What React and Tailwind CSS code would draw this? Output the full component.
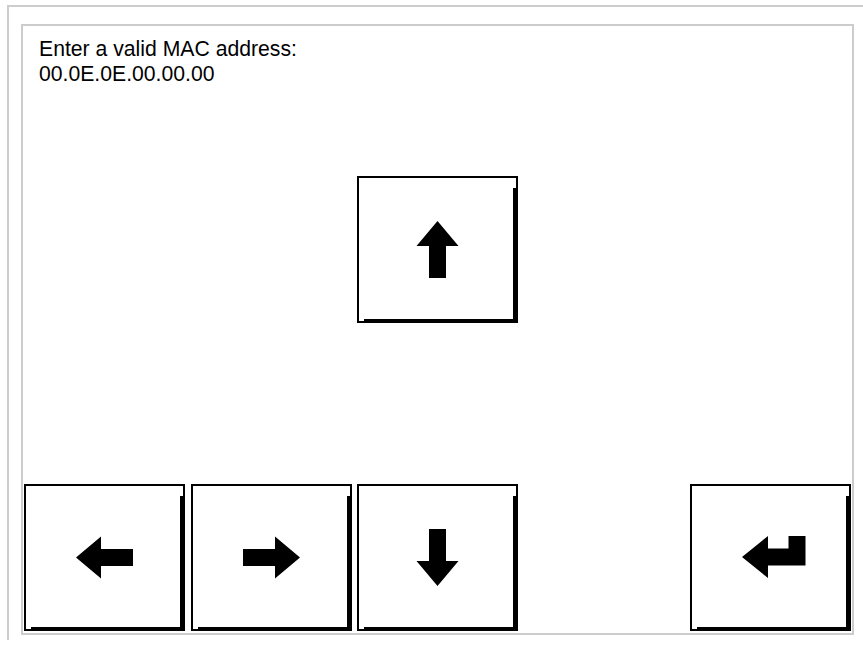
function Arrow({ dir }) {
  // one shape, turned for each direction
  const turn = { up: 'rotate-0', right: 'rotate-90', down: 'rotate-180', left: '-rotate-90' }[dir];
  return (
    <svg width="57" height="57" viewBox="0 0 57 57" className={turn}>
      <polygon points="28.5,0 49.5,25 37,25 37,57 20,57 20,25 7.5,25" fill="#000" />
    </svg>
  );
}

function EnterArrow() {
  return (
    <svg width="64" height="43" viewBox="0 0 64 43" className="ml-[6px]">
      <polygon points="0,21 26,0 26,12.5 46.5,12.5 46.5,0 63.5,0 63.5,29.5 26,29.5 26,42" fill="#000" />
    </svg>
  );
}

function Key({ children }) {
  return (
    <button className="relative w-[161px] h-[147px] bg-white border-2 border-black flex items-center justify-center before:content-[''] before:absolute before:right-0 before:top-[10px] before:bottom-0 before:w-[3px] before:bg-black after:content-[''] after:absolute after:left-[5px] after:right-0 after:bottom-0 after:h-[2px] after:bg-black">
      {children}
    </button>
  );
}

export default function App() {
  return (
    <div className="w-[863px] h-[651px] bg-white overflow-hidden pt-[5px] pl-[7px] font-['Liberation_Sans',Arial,sans-serif] text-black">
      <div className="h-[635px] border-t-2 border-l-2 border-[#cccccc] pt-[17px] pl-[12px]">
        <div className="w-[833px] h-[611px] border-2 border-[#cccccc] flex flex-col">
          <div className="pt-[10px] pl-[16px] text-[21.2px] leading-[25px]">
            <p>Enter a valid MAC address:</p>
            <p>00.0E.0E.00.00.00</p>
          </div>

          <div className="grid grid-cols-5 gap-x-[5.5px] px-[1px] mt-[90px]">
            <div />
            <div />
            <Key><Arrow dir="up" /></Key>
          </div>

          <div className="grid grid-cols-5 gap-x-[5.5px] px-[1px] mt-[161px]">
            <Key><Arrow dir="left" /></Key>
            <Key><Arrow dir="right" /></Key>
            <Key><Arrow dir="down" /></Key>
            <div />
            <Key><EnterArrow /></Key>
          </div>
        </div>
      </div>
    </div>
  );
}
